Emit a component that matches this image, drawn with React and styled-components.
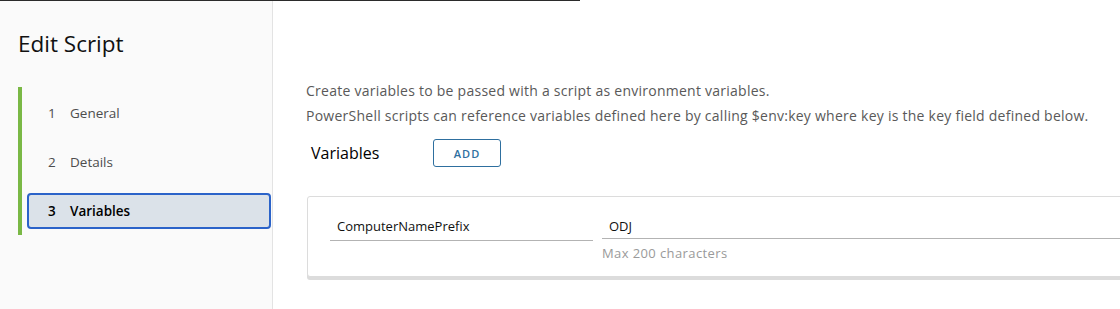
import React from "react";
import styled, { createGlobalStyle } from "styled-components";

const Global = createGlobalStyle`
  html, body { margin: 0; padding: 0; background: #fff; overflow: hidden; }
  body { font-family: "Open Sans", "Noto Sans", sans-serif; -webkit-font-smoothing: antialiased; }
  * { box-sizing: border-box; }
`;

const Page = styled.div`
  width: 1120px;
  height: 309px;
  display: flex;
  flex-direction: column;
  overflow: hidden;
`;

const TopRule = styled.div`
  height: 1px;
  width: 580px;
  background: #2b2b2b;
  flex: none;
`;

const Shell = styled.div`
  flex: 1;
  display: flex;
  min-height: 0;
`;

const Sidebar = styled.nav`
  width: 273px;
  flex: none;
  background: #fafafa;
  border-right: 1px solid #e3e3e3;
  padding: 28px 0 0 18px;
`;

const Title = styled.h1`
  margin: 0;
  font-size: 22.5px;
  font-weight: 400;
  line-height: 30px;
  color: #111;
`;

const Steps = styled.ol`
  list-style: none;
  margin: 28px 0 0;
  padding: 8px 0 6px;
  border-left: 4px solid #7ab845;
  display: flex;
  flex-direction: column;
  gap: 13px;
`;

const Step = styled.li`
  height: 36px;
  margin: 0 1px 0 5px;
  display: flex;
  align-items: center;
  padding-left: 19px;
  border: 2px solid ${(p) => (p.$active ? "#2b63c9" : "transparent")};
  border-radius: 4px;
  background: ${(p) => (p.$active ? "#dbe2e9" : "transparent")};
  color: ${(p) => (p.$active ? "#000" : "#4d4d4d")};
  font-size: 13.5px;
  font-weight: ${(p) => (p.$active ? 600 : 400)};
`;

const StepNum = styled.span`
  width: 22px;
  flex: none;
`;

const Main = styled.main`
  flex: 1;
  min-width: 0;
  padding: 77px 0 0 33px;
`;

const Intro = styled.p`
  margin: 0;
  font-size: 14px;
  letter-spacing: 0.25px;
  line-height: 25px;
  color: #595959;
  white-space: nowrap;
`;

const SectionHead = styled.div`
  display: flex;
  align-items: center;
  margin-top: 11px;
  padding-left: 5px;
`;

const SectionLabel = styled.span`
  width: 122px;
  font-size: 16px;
  color: #000;
`;

const OutlineButton = styled.button`
  width: 68px;
  height: 28px;
  border: 1px solid #2e6f9f;
  border-radius: 3px;
  background: #fff;
  color: #2e6f9f;
  font-family: inherit;
  font-size: 11px;
  font-weight: 600;
  letter-spacing: 1px;
  padding: 0;
`;

const Card = styled.div`
  margin-top: 29px;
  margin-left: 1px;
  width: 880px;
  border: 1px solid #dcdcdc;
  border-radius: 3px;
  box-shadow: 0 3px 0 #dcdcdc;
  background: #fff;
  padding: 14px 22px 13px;
  display: flex;
  align-items: flex-start;
  gap: 9px;
`;

const Field = styled.div`
  display: flex;
  flex-direction: column;
  flex: ${(p) => (p.$grow ? "1" : "none")};
  width: ${(p) => p.$w || "auto"};
`;

const Input = styled.div`
  height: ${(p) => p.$h}px;
  padding: 0 7px;
  border-bottom: 1px solid #b3b3b3;
  font-size: 13px;
  line-height: 30px;
  color: #111;
`;

const Helper = styled.div`
  margin-top: 4px;
  font-size: 13px;
  letter-spacing: 0.4px;
  line-height: 20px;
  color: #9a9a9a;
`;

export default function App() {
  return (
    <Page>
      <Global />
      <TopRule />
      <Shell>
        <Sidebar>
          <Title>Edit Script</Title>
          <Steps>
            <Step><StepNum>1</StepNum>General</Step>
            <Step><StepNum>2</StepNum>Details</Step>
            <Step $active><StepNum>3</StepNum>Variables</Step>
          </Steps>
        </Sidebar>
        <Main>
          <Intro>Create variables to be passed with a script as environment variables.</Intro>
          <Intro>PowerShell scripts can reference variables defined here by calling $env:key where key is the key field defined below.</Intro>
          <SectionHead>
            <SectionLabel>Variables</SectionLabel>
            <OutlineButton>ADD</OutlineButton>
          </SectionHead>
          <Card>
            <Field $w="263px">
              <Input $h={30}>ComputerNamePrefix</Input>
            </Field>
            <Field $grow>
              <Input $h={28}>ODJ</Input>
              <Helper>Max 200 characters</Helper>
            </Field>
          </Card>
        </Main>
      </Shell>
    </Page>
  );
}
